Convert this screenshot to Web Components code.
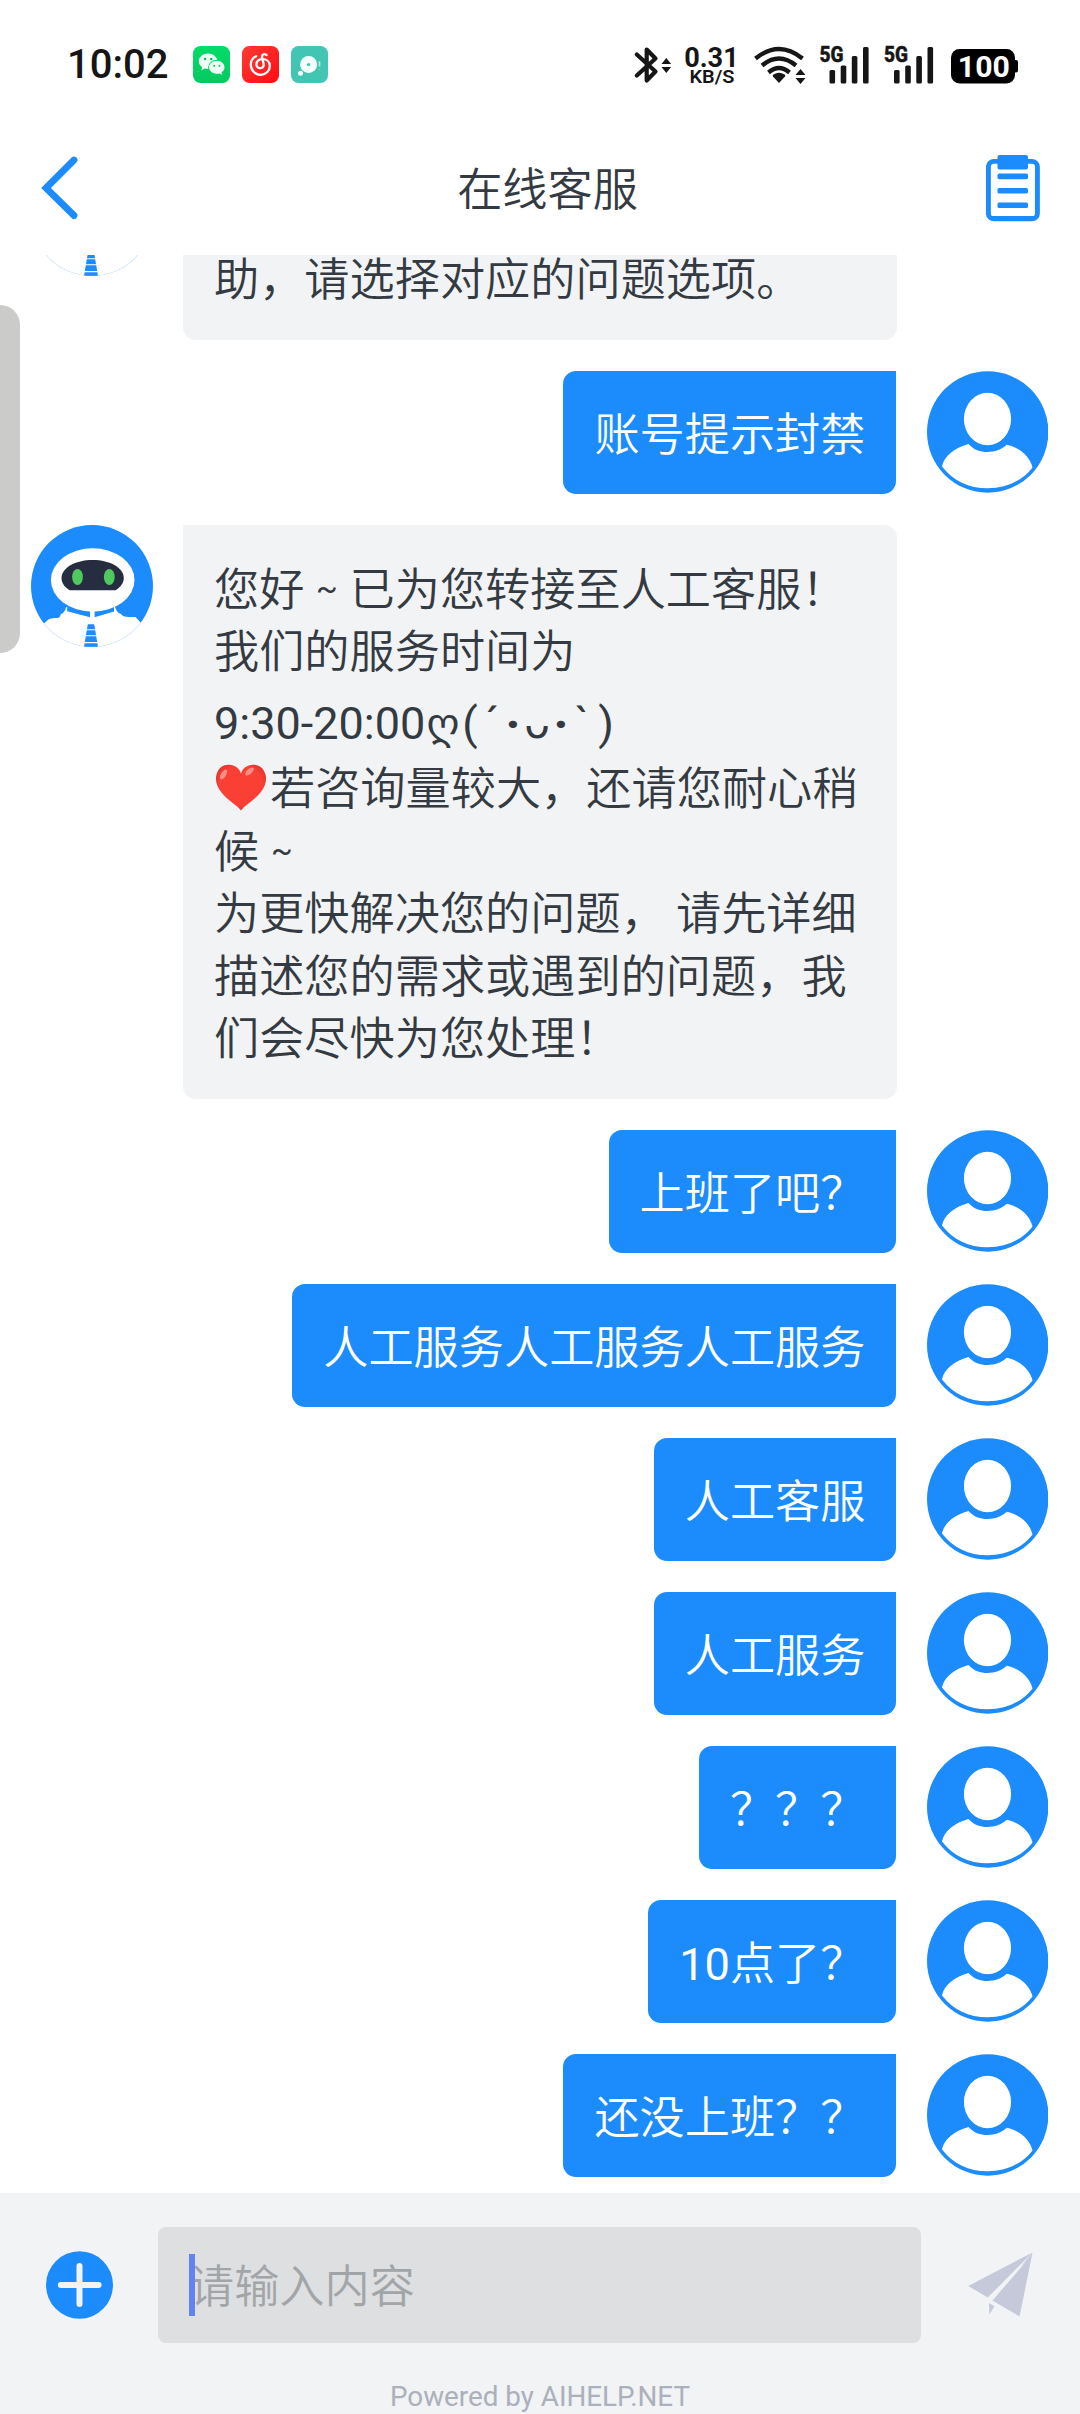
<!DOCTYPE html>
<html lang="zh-CN">
<head>
<meta charset="utf-8">
<title>在线客服</title>
<style>
html,body{margin:0;padding:0;background:#fff}
body{width:1080px;height:2414px;overflow:hidden;font-family:Roboto,"Noto Sans CJK SC",sans-serif;color:#343a41}
.latin{font-family:Roboto,sans-serif;font-weight:400}
</style>
</head>
<body>
<chat-screen>
  <status-bar slot="top"></status-bar>
  <nav-bar slot="top">在线客服</nav-bar>
  <chat-message from="bot" class="cut"><text-line>助，请选择对应的问题选项。</text-line></chat-message>
  <chat-message from="user">账号提示封禁</chat-message>
  <chat-message from="bot">
    <text-line>您好<wave-mark>~</wave-mark>已为您转接至人工客服！</text-line>
    <text-line>我们的服务时间为</text-line>
    <kaomoji-line></kaomoji-line>
    <text-line><heart-emoji></heart-emoji>若咨询量较大，还请您耐心稍</text-line>
    <text-line>候<wave-mark>~</wave-mark></text-line>
    <text-line>为更快解决您的问题， 请先详细</text-line>
    <text-line>描述您的需求或遇到的问题，我</text-line>
    <text-line>们会尽快为您处理！</text-line>
  </chat-message>
  <chat-message from="user">上班了吧？</chat-message>
  <chat-message from="user">人工服务人工服务人工服务</chat-message>
  <chat-message from="user">人工客服</chat-message>
  <chat-message from="user">人工服务</chat-message>
  <chat-message from="user">？？？</chat-message>
  <chat-message from="user"><span class="latin">10</span>点了？</chat-message>
  <chat-message from="user">还没上班？？</chat-message>
  <chat-composer slot="bottom"></chat-composer>
</chat-screen>

<script>
const define = (name, html) => customElements.define(name, class extends HTMLElement {
  constructor() {
    super();
    this.attachShadow({ mode: 'open' }).innerHTML = html.trim();
  }
});

define('chat-screen', `
<style>
:host{display:flex;flex-direction:column;width:1080px;height:2414px;position:relative;background:#fff}
main{flex:1;min-height:0;display:flex;flex-direction:column;justify-content:flex-end;gap:31px;padding:0 32px 16px 30.5px;overflow:hidden;box-sizing:border-box}
.edge{position:absolute;left:0;top:305px;width:20px;height:348px;border-radius:0 20px 20px 0;background:#cbcbca}
</style>
<slot name="top"></slot>
<main><slot></slot></main>
<slot name="bottom"></slot>
<div class="edge"></div>`);

const signal = `
<text x="819.5" y="61.400" font-size="22" font-weight="800" stroke="#161616" stroke-width=".5" textLength="24" lengthAdjust="spacingAndGlyphs">5G</text>
<rect x="829.5" y="69" width="5.6" height="13.6" rx="1.5"/><rect x="840.7" y="64.5" width="5.6" height="18" rx="1.5"/>
<rect x="851.8" y="55" width="5.6" height="27.5" rx="1.5"/><rect x="863" y="46" width="5.6" height="36.5" rx="1.5"/>`;

define('status-bar', `
<style>
:host{display:flex;align-items:center;height:128px;padding:0 62px 0 67px;justify-content:space-between;box-sizing:border-box;color:#161616}
.l,.r{display:flex;align-items:center}
time{font:500 40px/40px Roboto,sans-serif;width:102px;margin:2px 24px 0 0;white-space:nowrap}
.l svg{margin-right:12px}
.l svg,.r svg{margin-top:1px}
svg{display:block;overflow:visible}
text{font-family:Roboto,sans-serif}
</style>
<div class="l"><time>10:02</time>
<svg width="37" height="37" viewBox="0 0 37 37"><defs><linearGradient id="g" x2="0" y2="1"><stop stop-color="#04dc69"/><stop offset="1" stop-color="#06c95f"/></linearGradient></defs><rect width="37" height="37" rx="7.5" fill="url(#g)"/>
<path d="M15 7.5C9.900 7.500 5.800 11 5.800 15.300c0 2.400 1.300 4.600 3.400 6l-.8 2.900 3.200-1.700c5.300 1.500 12.800-1 12.800-7.200C24.400 11 20.200 7.500 15 7.500z" fill="#effff5"/>
<ellipse cx="23.800" cy="21.300" rx="8.700" ry="7.600" fill="#06d065"/><path d="M23.800 14.800c-4.300 0-7.700 2.900-7.700 6.500s3.400 6.500 7.700 6.500c1 0 1.900-.1 2.700-.4l2.700 1.400-.7-2.400c1.800-1.200 3-3 3-5.100 0-3.600-3.400-6.500-7.700-6.500z" fill="#effff5"/>
<g fill="#06c95f"><circle cx="12" cy="13" r="1.300"/><circle cx="18.300" cy="13" r="1.300"/><circle cx="21.200" cy="19.700" r="1"/><circle cx="26.500" cy="19.700" r="1"/></g></svg>
<svg width="37" height="37" viewBox="0 0 37 37"><defs><linearGradient id="r" x2="1" y2="1"><stop stop-color="#ff3b34"/><stop offset="1" stop-color="#ff0c13"/></linearGradient></defs><rect width="37" height="37" rx="7.500" fill="url(#r)"/>
<path d="M14.200 10.200C10.800 11.700 8.700 15 8.800 19c.2 5.600 4.600 9.900 10 9.800 5.300-.1 9.100-4.200 9-9.100-.1-4.200-3.300-6.700-7.600-6.600-3.500.1-5.900 2.400-5.800 5.300.1 2.300 1.700 3.900 3.900 3.800 2.300-.1 3.700-1.900 3.300-4.100l-1.500-6.500c-.6-2.800 2.300-4.500 4.400-2.500" fill="none" stroke="#fff" stroke-width="2.300" stroke-linecap="round"/></svg>
<svg width="37" height="37" viewBox="0 0 37 37"><rect width="37" height="37" rx="7.500" fill="#42c5b3"/><circle cx="17.600" cy="18.600" r="8.500" fill="#f5fffd"/><circle cx="17.600" cy="18.600" r="1.700" fill="#42c5b3"/><circle cx="9.500" cy="27.200" r="2.500" fill="#f5fffd"/><path d="M28.500 15.300v5.200M28.500 23v.6" stroke="#b8ebe4" stroke-width="1.600"/></svg>
</div>
<div class="r">
<svg width="384" height="40" viewBox="634 44 384 40" fill="#161616">
<path d="M636.800 53.500L655.500 70.500 646.700 79.500V48.500L655.500 57.500 636.800 74.500" fill="none" stroke="#161616" stroke-width="4.200" stroke-linejoin="round" stroke-linecap="round"/>
<path d="M661.500 63l4.800-6 4.800 6zM661.500 66l4.800 6 4.800-6z"/>
<text x="684.200" y="65.600" font-size="28" font-weight="700" textLength="54.500" lengthAdjust="spacingAndGlyphs">0.31</text>
<text x="689.500" y="82.200" font-size="18.500" font-weight="600" textLength="45" lengthAdjust="spacingAndGlyphs">KB/S</text>
<g fill="none" stroke="#161616" stroke-width="4.300" stroke-linecap="butt"><path d="M755.500 57.500Q779 38.500 802.500 57.500"/><path d="M762 64.500Q779 50.500 796 64.500"/><path d="M768.500 71.500Q779 62.500 789.500 71.500"/></g>
<path d="M779 82l-6-6.500q-.8-1 .5-2 5.500-3.500 11 0 1.300 1 .5 2z"/>
<path d="M795.500 74l5-6 5 6zM795.500 77l5 6 5-6z"/>
<g>${signal}</g>
<g transform="translate(64.500 0)">${signal}</g>
<rect x="951" y="48" width="64" height="34.500" rx="8.500" fill="#000"/><rect x="1012" y="59" width="6" height="12.500" rx="2" fill="#000"/>
<text x="957.800" y="75.500" font-size="29.500" font-weight="700" fill="#fff" textLength="52" lengthAdjust="spacingAndGlyphs">100</text>
</svg></div>`);

define('nav-bar', `
<style>
:host{display:flex;justify-content:space-between;align-items:flex-start;height:127px;padding:27px 39px 0 41px;box-sizing:border-box}
svg{display:block}
h1{margin:2px 0 0 13px;font:350 45.200px/60px "Noto Sans CJK SC",sans-serif;height:60px}
</style>
<svg width="55" height="68" viewBox="41 155 55 68"><path d="M74 160L46 188l28 27.500" fill="none" stroke="#1c8bfb" stroke-width="6.800" stroke-linecap="round" stroke-linejoin="miter"/></svg>
<h1><slot></slot></h1>
<svg width="55" height="68" viewBox="986 155 55 68" fill="#1c8bfb"><rect x="988.400" y="161.400" width="49" height="57.500" rx="5.500" fill="none" stroke="#1c8bfb" stroke-width="4.900"/><path d="M992 216h42v3h-42z"/><rect x="997.500" y="155" width="30.500" height="14.500" rx="2"/><rect x="997.500" y="173.600" width="30.500" height="5.600" rx="1.600"/><rect x="997.500" y="188" width="30.500" height="5.600" rx="1.600"/><rect x="997.500" y="202.500" width="30.500" height="5.600" rx="1.600"/></svg>`);

define('user-avatar', `
<style>:host{display:block;width:121.500px;height:122px}svg{display:block}</style>
<svg width="121.500" height="122" viewBox="0 0 121.500 122"><circle cx="60.700" cy="61" r="60.700" fill="#1c8bfb"/><ellipse cx="60.500" cy="48" rx="23.600" ry="26.300" fill="#fff"/><path d="M41.500 73C27 77 17 85.500 15 95.500 26 110 42 117.300 60.500 117.300S95 110 105.500 96.500C103 86 94 77 79.800 73.800 74 79 68 81 60.500 81S47 79 41.500 73z" fill="#fff"/></svg>`);

define('bot-avatar', `
<style>:host{display:block;width:122px;height:122px}svg{display:block}</style>
<svg width="122" height="122" viewBox="0 0 122 122"><defs><clipPath id="c"><circle cx="61" cy="61" r="61"/></clipPath></defs>
<g clip-path="url(#c)"><rect width="122" height="122" fill="#1c8bfb"/>
<path d="M0 122V98h13.500l4.500-4q5-1.500 9-1 2-.5 3-4 3.500-1 5.300-7h.9v4.300L59 92.300V84h4.600v8.300L83 86.500V82h1q2 6 6 7 1.500 3 8 3h6.500l5.500 6H122v24z" fill="#fff"/>
<ellipse cx="61.700" cy="55" rx="41.800" ry="31.700" fill="#fff"/>
<path d="M38.800 65.300C33 62 30.500 57.500 30.500 53 30.500 43 44 35 61.700 35S92.800 43 92.800 53C92.800 57.500 90 62 84.500 65.300z" fill="#262d41"/>
<ellipse cx="46.500" cy="52" rx="5.400" ry="8" fill="#4ecb5c"/><ellipse cx="78.300" cy="52" rx="5.400" ry="8" fill="#4ecb5c"/>
<path d="M56.800 99.300h6.400L67 122H53z" fill="#1c8bfb"/><path d="M52 104.700h16M52 110.800h16M52 117.600h16" stroke="#fff" stroke-width="1.100"/></g>
<path d="M13.500 98.500C25 113 42 121.500 61 121.500S97 113 108.500 98.500" fill="none" stroke="#f1f4f6" stroke-width=".6"/><path d="M53.500 120.200h13l.4 1.400q-7 .5-13.800 0z" fill="#1c8bfb"/></svg>`);

define('text-line', `
<style>:host{display:block;height:62.600px;line-height:62.600px;white-space:nowrap}</style><slot></slot>`);

define('wave-mark', `
<style>:host{display:inline-block;width:45.200px;text-align:center;font:400 32px/40px Roboto,sans-serif;vertical-align:7px}</style><slot></slot>`);

define('heart-emoji', `
<style>:host{display:inline-block;width:56px;height:47px;vertical-align:-6px}svg{display:block;margin-left:1px}</style>
<svg width="52" height="47" viewBox="0 0 52 47" preserveAspectRatio="none" role="img" aria-label="❤️"><defs><radialGradient id="h" cx=".5" cy=".45" r=".6"><stop offset=".7" stop-color="#fa4035"/><stop offset="1" stop-color="#d9332c"/></radialGradient></defs>
<path d="M26 46.500C22 41 13.500 37 6.500 28.500 1.500 22 0 16 1.500 10.500 3.500 3.500 8.500.5 14 .8 20 1 24.500 4.500 26 9.500 27.500 4.500 32 1 38 .8 43.500.5 48.500 3.500 50.500 10.500 52 16 50.500 22 45.500 28.500 38.500 37 30 41 26 46.500z" fill="url(#h)"/>
<ellipse cx="8.500" cy="10.500" rx="2.600" ry="5.500" transform="rotate(32 8.500 10.500)" fill="#ff8d82"/><ellipse cx="34.500" cy="7.500" rx="2.600" ry="5.300" transform="rotate(50 34.500 7.500)" fill="#ff8d82"/></svg>`);

define('kaomoji-line', `
<style>:host{display:flex;height:74px;font:400 45px/85px Roboto,sans-serif;white-space:nowrap}
span{flex:none;display:flex;justify-content:center}
.d{font-family:"DejaVu Sans",sans-serif;font-size:42px}
.e{font-weight:900}
</style><span style="width:211px;justify-content:flex-start">9:30-20:00</span><span class="d" style="width:36px">ღ</span><span style="width:18px">(</span><span style="width:20px;justify-content:flex-end">´</span><span class="e" style="width:28px">·</span><span class="d" style="width:20px">ᴗ</span><span class="e" style="width:28px">·</span><span style="width:22px;justify-content:flex-start">\`</span><span style="width:18px">)</span>`);

customElements.define('chat-message', class extends HTMLElement {
  constructor() {
    super();
    const mine = this.getAttribute('from') === 'user';
    this.attachShadow({ mode: 'open' }).innerHTML = `
<style>
:host{display:flex;flex:none;gap:${mine ? 31 : 30.5}px;align-items:flex-start;justify-content:${mine ? 'flex-end' : 'flex-start'}}
:host(.cut) .b{height:185.500px;display:flex;flex-direction:column;justify-content:flex-end}
.b{box-sizing:border-box;font:350 45.200px/62.600px "Noto Sans CJK SC",sans-serif;white-space:nowrap}
.mine{height:123px;padding:30px 30px 30px 31px;border-radius:13px 0 13px 13px;background:#1c8bfb;color:#fff}
.bot{width:714px;padding:31px 0 31px 31px;border-radius:0 13px 13px 13px;background:#f1f3f5;color:#343a41}
</style>` + (mine
      ? `<div class="b mine"><slot></slot></div><user-avatar></user-avatar>`
      : `<bot-avatar></bot-avatar><div class="b bot"><slot></slot></div>`);
  }
});

define('chat-composer', `
<style>
:host{display:flex;flex-direction:column;height:221px;background:#f1f3f5;box-sizing:border-box;padding-top:33.700px}
.row{display:flex;align-items:center;height:116px;padding-left:46px}
.box{position:relative;display:flex;align-items:center;box-sizing:border-box;width:763px;height:116px;margin:0 47px 0 45px;padding:0 0 1px 31px;border-radius:8px;background:#dedfe1;color:#a2a5a8;font:350 45.200px/62px "Noto Sans CJK SC",sans-serif}
.caret{position:absolute;left:31px;top:27px;width:6px;height:62px;background:#6480f5}
footer{margin-top:36px;height:29px;text-align:center;font:400 27.800px/36px Roboto,sans-serif;color:#abb0bb}
svg{display:block;flex:none}
</style>
<div class="row">
<svg width="67" height="68" viewBox="0 0 67 68"><ellipse cx="33.500" cy="34" rx="33.500" ry="33.700" fill="#1c8bfb"/><path d="M33.500 15v38M14.800 34h37.800" stroke="#f1f3f5" stroke-width="6" stroke-linecap="round"/></svg>
<div class="box"><span>请输入内容</span><i class="caret"></i></div>
<svg width="66" height="66" viewBox="969 2252 66 66" fill="#c5c9da"><path d="M1033.500 2252.500L969.300 2286l19.500 11.500z"/><path d="M1033.500 2252.500L993.500 2300.500 1020.500 2316.500z"/><path d="M990 2303l5.500 3.200-5.200 8.500z"/><path d="M1027 2262L988.800 2297.500l4.500 2.800z" fill="#f1f3f5"/></svg>
</div>
<footer>Powered by AIHELP.NET</footer>`);
</script>
</body>
</html>
